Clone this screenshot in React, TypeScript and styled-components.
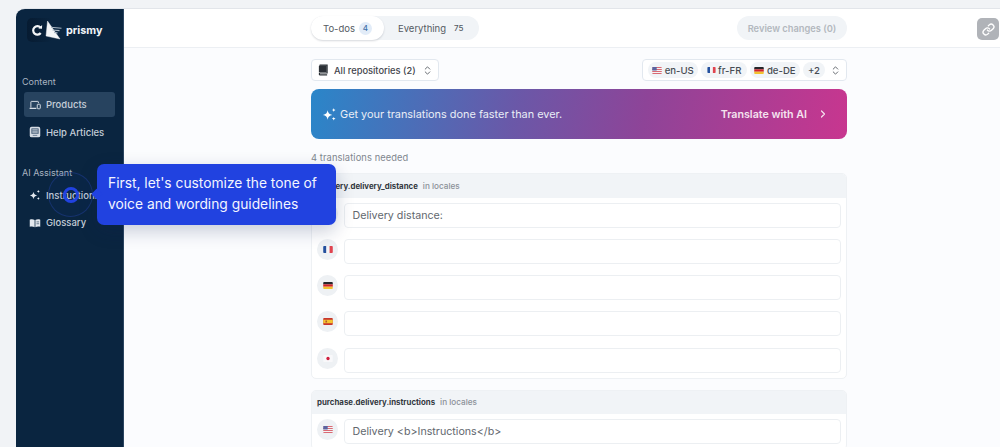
import React from "react";
import styled, { createGlobalStyle } from "styled-components";
import { ChevronsUpDown, ChevronRight, Link as LinkIcon } from "lucide-react";

const Global = createGlobalStyle`
  html, body { margin: 0; padding: 0; height: 100%; overflow: hidden; background: #f1f3f6; }
  #root { height: 100%; }
  * { box-sizing: border-box; }
`;
const Page = styled.div`
  position: relative; height: 447px; padding: 8px 0 0 16px; overflow: hidden;
  font-family: Inter, "Liberation Sans", sans-serif;
`;
const Frame = styled.div`
  display: flex; height: 439px; border-top: 1px solid #e2e5ea; border-top-left-radius: 9px; overflow: hidden; background: #fbfcfe;
`;
const Sidebar = styled.aside`
  width: 108px; flex: none; background: #0a2540; border-right: 1px solid #2b4560; display: flex; flex-direction: column; padding: 0 8px 0 8px;
`;
const Logo = styled.div`
  height: 67px; display: flex; align-items: flex-start; padding: 12px 0 0 7px; gap: 4px; color: #f2f5f8;
  font-size: 10.8px; font-weight: 700;
`;
const LogoText = styled.span` margin-top: 3px; `;
const SideSection = styled.div`
  display: flex; flex-direction: column; margin-bottom: 19.5px;
`;
const SideLabel = styled.div`
  height: 12px; line-height: 12px; font-size: 9px; color: #a9b4c0; margin: 0 0 4px -2px;
`;
const SideItem = styled.div<{ $active?: boolean }>`
  height: 25px; margin-bottom: 2.5px; border-radius: 3px; display: flex; align-items: center; gap: 5px; padding-left: 5px;
  font-size: 9.5px; font-weight: 500; color: #c5ced8; white-space: nowrap;
  background: ${p => (p.$active ? "#27435f" : "transparent")};
`;
const Main = styled.main`
  flex: 1; min-width: 0; display: flex; flex-direction: column; 
`;
const Header = styled.header`
  height: 39px; flex: none; background: #fff; border-bottom: 1px solid #eceff3; display: flex; align-items: flex-start; padding: 7px 1px 0 187px;
`;
const HeaderInner = styled.div`
  width: 536px; display: flex; justify-content: space-between;
`;
const Tabs = styled.div`
  display: flex; height: 24px; background: #f1f4f7; border-radius: 12px; padding-right: 15px; align-items: center;
`;
const Tab = styled.div<{ $active?: boolean }>`
  height: 24px; display: flex; align-items: center; border-radius: 12px; font-size: 9.5px; color: #555b63;
  padding: ${p => (p.$active ? "0 12px" : "0 0 0 14px")};
  ${p => p.$active && "background: #fff; box-shadow: 0 1px 2px rgba(30,40,60,.18);"}
`;
const TabCount = styled.span<{ $active?: boolean }>`
  margin-left: ${p => (p.$active ? "4px" : "8px")}; font-size: 8px; font-weight: 500;
  ${p => p.$active
    ? "width: 13px; height: 13px; border-radius: 50%; background: #e2ecf8; color: #3d6fa8; display: flex; align-items: center; justify-content: center;"
    : "color: #555b63;"}
`;
const ReviewButton = styled.div`
  height: 24px; width: 110px; border-radius: 12px; background: #f1f4f7; color: #b3b8be; font-size: 9.3px; font-weight: 600;
  display: flex; align-items: center; justify-content: center;
`;
const ShareButton = styled.div`
  width: 22px; height: 22px; margin: 2px 0 0 auto; border-radius: 5px; background: #b0b3b8; color: #fff; display: flex; align-items: center; justify-content: center;
`;
const Content = styled.div`
  width: 536px; margin-left: 187px; padding-top: 11px; display: flex; flex-direction: column;
`;
const FilterRow = styled.div`
  display: flex; justify-content: space-between; height: 22px; margin-bottom: 8px;
`;
const Select = styled.div<{ $w: number }>`
  width: ${p => p.$w}px; height: 22px; background: #fff; border: 1px solid #e2e8ef; border-radius: 4px; display: flex; align-items: center;
  padding: 0 5px; font-size: 9.3px; font-weight: 500; color: #3f444b; white-space: nowrap;
`;
const Grow = styled.span` flex: 1; `;
const SelectLabel = styled.span` margin-left: 5px; flex: 1; `;
const Chips = styled.div` display: flex; gap: 3px; flex: 1; `;
const Chip = styled.div<{ $w: number }>`
  width: ${p => p.$w}px; height: 16px; border-radius: 8px; background: #f1f4f7; display: flex; align-items: center; justify-content: center; gap: 2.5px;
  font-size: 9.6px; color: #474c53; font-weight: 500;
`;
const Banner = styled.div`
  height: 50px; border-radius: 8px; display: flex; align-items: center; color: #fff; padding: 0 18px 0 11px;
  background: linear-gradient(100deg, #2a86c9 0%, #6a58a8 38%, #8e4498 62%, #c8368f 100%);
  font-size: 10.9px; 
`;
const BannerText = styled.span` margin-left: 3px; flex: 1; color: #e9edf6; `;
const BannerAction = styled.span` font-weight: 600; font-size: 10.7px; color: #f5e3ef; margin-right: 10px; `;
const NeedCount = styled.div`
  height: 12px; line-height: 12px; margin: 13px 0 9px; font-size: 9.3px; color: #80868e; letter-spacing: .1px;
`;
const Card = styled.section`
  background: #fff; border: 1px solid #eef1f4; border-radius: 5px; margin-bottom: 11px; flex: none; overflow: hidden; padding-bottom: 5px;
`;
const CardHead = styled.div`
  height: 23.5px; background: #f1f4f7; display: flex; align-items: center; padding-left: 5px; gap: 5px; font-size: 7.85px; font-weight: 700; color: #33383e;
`;
const CardHint = styled.span` color: #8b9198; font-weight: 500; font-size: 8.2px; `;
const Rows = styled.div` padding: 5px 5px 0 5px; display: flex; flex-direction: column; gap: 11.25px; `;
const Row = styled.div` display: flex; align-items: flex-start; gap: 6px; height: 25px; `;
const FlagDot = styled.div`
  width: 21px; height: 21px; flex: none; border-radius: 50%; background: #eef1f4; display: flex; align-items: center; justify-content: center;
`;
const Input = styled.div`
  flex: 1; height: 25px; background: #fff; border: 1px solid #eceff2; border-radius: 4px; padding-left: 7.5px; line-height: 23px; font-size: 10.7px; color: #62676e;
`;
const Tooltip = styled.div`
  position: absolute; left: 97px; top: 164px; width: 239px; height: 61px; background: #2142e0; border-radius: 7px; color: #f3f5ff;
  font-size: 13.8px; line-height: 20.5px; padding: 9px 10px 0 11px; box-shadow: 0 6px 18px rgba(15,30,80,.22);
  &::before { content: ""; position: absolute; left: -4px; top: 26px; width: 8px; height: 8px; background: #2142e0; transform: rotate(45deg); border-radius: 1px; }
`;
const Pulse = styled.div`
  position: absolute; left: 48px; top: 172px; width: 45px; height: 45px; border-radius: 50%; border: 1px solid rgba(40,70,170,.4);
  background: rgba(33,66,224,.04);
`;
const PulseCore = styled.div`
  position: absolute; left: 62.5px; top: 187px; width: 16px; height: 16px; border-radius: 50%; border: 3px solid #2142e0;
`;

type Code = "us" | "fr" | "de" | "es" | "jp";
const Flag = ({ code, size = 10 }: { code: Code; size?: number }) => {
  const h = Math.round(size * 0.72);
  return (
    <svg width={size} height={h} viewBox="0 0 15 11" style={{ borderRadius: 1, flex: "none" }}>
      {code === "us" && (<>
        <rect width="15" height="11" fill="#f3f3f5" />
        <path d="M0 0h15v1.6H0zM0 3.2h15v1.6H0zM0 6.4h15V8H0zM0 9.6h15V11H0z" fill="#d96a74" />
        <rect width="7" height="5.5" fill="#5a64a0" />
      </>)}
      {code === "fr" && (<>
        <rect width="5" height="11" fill="#24509e" />
        <rect x="5" width="5" height="11" fill="#f5f5f7" />
        <rect x="10" width="5" height="11" fill="#e0444f" />
      </>)}
      {code === "de" && (<>
        <rect width="15" height="3.7" fill="#26262a" />
        <rect y="3.7" width="15" height="3.7" fill="#d3242b" />
        <rect y="7.4" width="15" height="3.6" fill="#f2c230" />
      </>)}
      {code === "es" && (<>
        <rect width="15" height="11" fill="#c8362c" />
        <rect y="2.8" width="15" height="5.4" fill="#f4c432" />
        <rect x="3.5" y="4" width="2.5" height="3" fill="#b4572c" />
      </>)}
      {code === "jp" && (<>
        <rect width="15" height="11" fill="#f8f8fa" />
        <circle cx="7.5" cy="5.5" r="2.6" fill="#d0213f" />
      </>)}
    </svg>
  );
};

const Sparkles = ({ size = 11, color = "#fff" }: { size?: number; color?: string }) => (
  <svg width={size} height={size} viewBox="0 0 16 16" fill={color} style={{ flex: "none" }}>
    <path d="M6 3.5c.5 3 1.800 4.300 5 5-3.200.7-4.500 2-5 5-.5-3-1.800-4.300-5-5 3.200-.7 4.500-2 5-5z" />
    <path d="M12.500 1c.2 1.300.8 1.900 2 2.200-1.200.3-1.800.9-2 2.200-.2-1.300-.8-1.900-2-2.200 1.200-.3 1.800-.9 2-2.200z" />
    <path d="M12.500 10.500c.2 1.200.7 1.700 1.900 2-1.200.3-1.700.8-1.900 2-.2-1.200-.7-1.700-1.900-2 1.200-.3 1.700-.8 1.900-2z" />
  </svg>
);
const ProductsIcon = () => (
  <svg width="12" height="12" viewBox="0 0 16 16" fill="none" stroke="#d5dce4" strokeWidth="1.300" style={{ flex: "none" }}>
    <path d="M2.500 11.500V4c0-.5.300-.8.800-.8h8.400c.5 0 .8.300.8.800v1.500" />
    <path d="M.8 12.500h9" strokeWidth="1.500" />
    <rect x="11" y="7" width="4" height="6" rx=".8" />
  </svg>
);
const ArticlesIcon = () => (
  <svg width="12" height="12" viewBox="0 0 16 16" style={{ flex: "none" }}>
    <rect x="1" y="1" width="14" height="14" rx="2.500" fill="#d5dce4" />
    <rect x="3" y="3" width="10" height="7.500" rx="1" fill="#5b7088" />
    <path d="M4.500 5h7M4.500 7h7M4.500 9h7" stroke="#d5dce4" strokeWidth=".9" />
    <path d="M5 12.500h6" stroke="#5b7088" strokeWidth="1.100" />
  </svg>
);
const GlossaryIcon = () => (
  <svg width="12" height="12" viewBox="0 0 16 16" style={{ flex: "none" }}>
    <path d="M1 3.500c2.300-.6 4.800-.6 6.500.6v9.400c-1.700-1.100-4.200-1.200-6.500-.6z" fill="#e3e8ee" />
    <path d="M15 3.500c-2.300-.6-4.800-.6-6.500.6v9.400c1.700-1.100 4.200-1.200 6.500-.6z" fill="#e3e8ee" />
    <path d="M10 6.500h3.500M10 9h3.500" stroke="#41586f" strokeWidth="1" />
  </svg>
);
const RepoIcon = () => (
  <svg width="12" height="12" viewBox="0 0 16 16" style={{ flex: "none" }}>
    <path d="M3.500 1.500h10v10.500h-9.500a1.300 1.300 0 0 0 0 2.500h9.500" fill="none" stroke="#2b3036" strokeWidth="1.500" />
    <path d="M3 2h10v9H4c-.6 0-1 .1-1.500.4V2.500z" fill="#2b3036" />
  </svg>
);
const LogoMark = () => (
  <svg width="31" height="20" viewBox="0 0 31 20" fill="none" style={{ flex: "none", overflow: "visible" }}>
    <defs>
      <linearGradient id="logoPatch" x1="0" x2="1" y1="0" y2="0">
        <stop offset="0" stopColor="#061a30" stopOpacity=".9" />
        <stop offset="1" stopColor="#061a30" stopOpacity="0" />
      </linearGradient>
    </defs>
    <rect x="-4" y="-3" width="26" height="24" rx="5" fill="url(#logoPatch)" />
    <path d="M9.500 6.600A4.200 4.200 0 1 0 9.700 12" stroke="#f4f6f8" strokeWidth="2.200" />
    <path d="M7.400 7.400l3.600.3.100-3.700z" fill="#f4f6f8" />
    <path d="M16.500 0l12.500 18-14-3z" fill="#f4f6f8" stroke="#f4f6f8" strokeWidth=".4" strokeLinejoin="round" />
    <path d="M20 6.200l10.500 1M21.500 9l7 .6M23 11.500l3.500.4" stroke="#aab7c4" strokeWidth="1.100" />
  </svg>
);

const rowsA: { code: Code; text?: string }[] = [
  { code: "us", text: "Delivery distance:" }, { code: "fr" }, { code: "de" }, { code: "es" }, { code: "jp" },
];

export default function App() {
  return (
    <Page>
      <Global />
      <Frame>
        <Sidebar>
          <Logo><LogoMark /><LogoText>prismy</LogoText></Logo>
          <SideSection>
            <SideLabel>Content</SideLabel>
            <SideItem $active><ProductsIcon />Products</SideItem>
            <SideItem><ArticlesIcon />Help Articles</SideItem>
          </SideSection>
          <SideSection>
            <SideLabel>AI Assistant</SideLabel>
            <SideItem><Sparkles size={12} color="#e3e8ee" />Instructions</SideItem>
            <SideItem><GlossaryIcon />Glossary</SideItem>
          </SideSection>
        </Sidebar>
        <Main>
          <Header>
            <HeaderInner>
              <Tabs>
                <Tab $active>To-dos<TabCount $active>4</TabCount></Tab>
                <Tab>Everything<TabCount>75</TabCount></Tab>
              </Tabs>
              <ReviewButton>Review changes (0)</ReviewButton>
            </HeaderInner>
            <ShareButton><LinkIcon size={13} strokeWidth={2.5} /></ShareButton>
          </Header>
          <Content>
            <FilterRow>
              <Select $w={128}>
                <RepoIcon />
                <SelectLabel>All repositories (2)</SelectLabel>
                <ChevronsUpDown size={11} color="#5a5f66" />
              </Select>
              <Select $w={205}>
                <Chips>
                  <Chip $w={50}><Flag code="us" />en-US</Chip>
                  <Chip $w={46}><Flag code="fr" size={9} />fr-FR</Chip>
                  <Chip $w={50}><Flag code="de" />de-DE</Chip>
                  <Chip $w={22}>+2</Chip>
                </Chips>
                <Grow />
                <ChevronsUpDown size={11} color="#5a5f66" />
              </Select>
            </FilterRow>
            <Banner>
              <Sparkles size={15} />
              <BannerText>Get your translations done faster than ever.</BannerText>
              <BannerAction>Translate with AI</BannerAction>
              <ChevronRight size={12} strokeWidth={2.4} color="#f5e3ef" />
            </Banner>
            <NeedCount>4 translations needed</NeedCount>
            <Card>
              <CardHead>delivery.delivery_distance<CardHint>in locales</CardHint></CardHead>
              <Rows>
                {rowsA.map(r => (
                  <Row key={r.code}>
                    <FlagDot><Flag code={r.code} /></FlagDot>
                    <Input>{r.text}</Input>
                  </Row>
                ))}
              </Rows>
            </Card>
            <Card>
              <CardHead>purchase.delivery.instructions<CardHint>in locales</CardHint></CardHead>
              <Rows>
                <Row>
                  <FlagDot><Flag code="us" /></FlagDot>
                  <Input>{"Delivery <b>Instructions</b>"}</Input>
                </Row>
              </Rows>
            </Card>
          </Content>
        </Main>
      </Frame>
      <Pulse />
      <PulseCore />
      <Tooltip>First, let's customize the tone of voice and wording guidelines</Tooltip>
    </Page>
  );
}
